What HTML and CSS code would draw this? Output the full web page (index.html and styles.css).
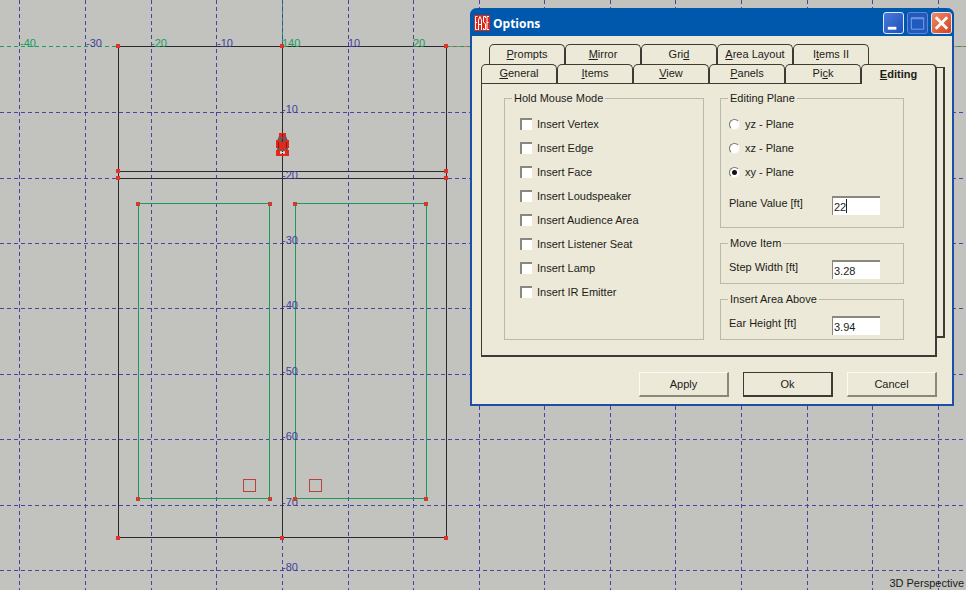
FILE: index.html
```html
<!DOCTYPE html>
<html lang="en">
<head>
<meta charset="utf-8">
<title>Options</title>
<link rel="stylesheet" href="styles.css">
</head>
<body>
<main class="workspace">
  <svg class="plan" aria-label="Floor plan">
    <line class="axis-y" x1="282.5" y1="0" x2="282.5" y2="46"/>
    <g class="grid">
      <line x1="19.5" y1="0" x2="19.5" y2="100%"/>
      <line x1="85.5" y1="0" x2="85.5" y2="100%"/>
      <line x1="151.5" y1="0" x2="151.5" y2="100%"/>
      <line x1="216.5" y1="0" x2="216.5" y2="100%"/>
      <line x1="282.5" y1="0" x2="282.5" y2="100%"/>
      <line x1="348.5" y1="0" x2="348.5" y2="100%"/>
      <line x1="413.5" y1="0" x2="413.5" y2="100%"/>
      <line x1="479.5" y1="0" x2="479.5" y2="100%"/>
      <line x1="544.5" y1="0" x2="544.5" y2="100%"/>
      <line x1="610.5" y1="0" x2="610.5" y2="100%"/>
      <line x1="675.5" y1="0" x2="675.5" y2="100%"/>
      <line x1="741.5" y1="0" x2="741.5" y2="100%"/>
      <line x1="807.5" y1="0" x2="807.5" y2="100%"/>
      <line x1="872.5" y1="0" x2="872.5" y2="100%"/>
      <line x1="938.5" y1="0" x2="938.5" y2="100%"/>
      <line x1="0" y1="112.5" x2="100%" y2="112.5"/>
      <line x1="0" y1="178.5" x2="100%" y2="178.5"/>
      <line x1="0" y1="243.5" x2="100%" y2="243.5"/>
      <line x1="0" y1="308.5" x2="100%" y2="308.5"/>
      <line x1="0" y1="374.5" x2="100%" y2="374.5"/>
      <line x1="0" y1="439.5" x2="100%" y2="439.5"/>
      <line x1="0" y1="505.5" x2="100%" y2="505.5"/>
      <line x1="0" y1="570.5" x2="100%" y2="570.5"/>
    </g>
    <line class="axis-x" x1="446" y1="46.5" x2="100%" y2="46.5"/>
    <line class="axis" x1="0" y1="46.5" x2="118" y2="46.5"/>
    <line class="axis" x1="446" y1="46.5" x2="100%" y2="46.5"/>
    <g class="seating">
      <rect x="138.5" y="203.5" width="131" height="295"/>
      <rect x="295.5" y="203.5" width="131" height="295"/>
    </g>
    <g class="walls">
      <rect x="118.5" y="46.5" width="328" height="491"/>
      <line x1="118" y1="171.5" x2="446" y2="171.5"/>
      <line x1="118" y1="178.5" x2="446" y2="178.5"/>
      <line x1="282.5" y1="46" x2="282.5" y2="538"/>
    </g>
    <g class="ticks">
      <text class="on-axis" x="20" y="47">-40</text>
      <text x="86" y="47">-30</text>
      <text class="on-axis" x="151" y="47">-20</text>
      <text x="217" y="47">-10</text>
      <text class="on-axis" x="282" y="47">140</text>
      <text x="348" y="47">10</text>
      <text class="on-axis" x="413" y="47">20</text>
      <text x="282" y="113">-10</text>
      <text x="282" y="179">-20</text>
      <text x="282" y="244">-30</text>
      <text x="282" y="309">-40</text>
      <text x="282" y="375">-50</text>
      <text x="282" y="440">-60</text>
      <text x="282" y="506">-70</text>
      <text x="282" y="571">-80</text>
    </g>
    <g class="seats">
      <rect x="243.5" y="479.5" width="12" height="12"/>
      <rect x="309.5" y="479.5" width="12" height="12"/>
    </g>
    <g class="vertices">
      <rect x="116" y="44" width="4" height="4"/>
      <rect x="280" y="44" width="4" height="4"/>
      <rect x="444" y="44" width="4" height="4"/>
      <rect x="116" y="169" width="4" height="4"/>
      <rect x="444" y="169" width="4" height="4"/>
      <rect x="116" y="176" width="4" height="4"/>
      <rect x="444" y="176" width="4" height="4"/>
      <rect x="116" y="536" width="4" height="4"/>
      <rect x="280" y="536" width="4" height="4"/>
      <rect x="444" y="536" width="4" height="4"/>
    </g>
    <g class="vertices seat-vertices">
      <rect x="136" y="202" width="4" height="4"/>
      <rect x="268" y="202" width="4" height="4"/>
      <rect x="293" y="202" width="4" height="4"/>
      <rect x="424" y="202" width="4" height="4"/>
      <rect x="136" y="497" width="4" height="4"/>
      <rect x="268" y="497" width="4" height="4"/>
      <rect x="293" y="497" width="4" height="4"/>
      <rect x="424" y="497" width="4" height="4"/>
    </g>
    <g class="speaker">
      <path class="cage" d="M279 136h7l2 5v10h-11v-10z"/>
      <rect x="279" y="133" width="7" height="4"/>
      <rect x="276" y="140" width="4" height="8"/>
      <rect x="285" y="140" width="4" height="8"/>
      <rect x="280" y="142" width="5" height="8"/>
      <path class="shade" d="M282.500 134v3M278.500 142v6M286.500 142v6M282.500 138v4"/>
      <rect x="276" y="150" width="4" height="6"/>
      <rect x="285" y="150" width="4" height="6"/>
      <rect x="279" y="154" width="7" height="2"/>
      <path class="glint" d="M280 152.500h5"/>
    </g>
  </svg>
  <div class="view-name">3D Perspective</div>

  <section class="dialog" role="dialog" aria-labelledby="dialog-title">
    <header class="titlebar">
      <svg class="logo" viewBox="0 0 16 16" aria-hidden="true">
        <rect width="16" height="16" fill="#d8281e"/>
        <path d="M3.500 1.500h-2v13h2M1.500 7.500h1.500M4.500 15V5L6 1.500L7.500 5V15M4.500 9.500h3M11.500 3V1.500h-2V7l2 2v5.500h-2V13M15 1.500h-2v13h2M13 7.500h1.500" fill="none" stroke="#fff"/>
      </svg>
      <h1 id="dialog-title">Options</h1>
      <button class="caption" type="button" aria-label="Minimize">
        <svg viewBox="0 0 20 20"><path d="M4 14h9v3H4z" fill="#fff"/></svg>
      </button>
      <button class="caption disabled" type="button" aria-label="Maximize" disabled>
        <svg viewBox="0 0 20 20"><path d="M3.500 4.500h13v12h-13zM3 5.500h14" fill="none" stroke="#7fa0ee"/></svg>
      </button>
      <button class="caption close" type="button" aria-label="Close">
        <svg viewBox="0 0 20 20"><path d="M4 4l12 12M16 4L4 16" stroke="#fff" stroke-width="3"/></svg>
      </button>
    </header>

    <form class="body">
      <div class="tabset">
        <div class="tabs back" role="tablist">
          <button type="button" role="tab"><span><u>P</u>rompts</span></button>
          <button type="button" role="tab"><span><u>M</u>irror</span></button>
          <button type="button" role="tab"><span>Gri<u>d</u></span></button>
          <button type="button" role="tab"><span><u>A</u>rea Layout</span></button>
          <button type="button" role="tab"><span>I<u>t</u>ems II</span></button>
        </div>
        <div class="tabs" role="tablist">
          <button type="button" role="tab"><span><u>G</u>eneral</span></button>
          <button type="button" role="tab"><span><u>I</u>tems</span></button>
          <button type="button" role="tab"><span><u>V</u>iew</span></button>
          <button type="button" role="tab"><span><u>P</u>anels</span></button>
          <button type="button" role="tab"><span>Pi<u>c</u>k</span></button>
          <button type="button" role="tab" class="active" aria-selected="true"><span><u>E</u>diting</span></button>
        </div>
        <div class="page" role="tabpanel">
          <fieldset class="modes">
            <legend>Hold Mouse Mode</legend>
            <label class="option"><input type="checkbox">Insert Vertex</label>
            <label class="option"><input type="checkbox">Insert Edge</label>
            <label class="option"><input type="checkbox">Insert Face</label>
            <label class="option"><input type="checkbox">Insert Loudspeaker</label>
            <label class="option"><input type="checkbox">Insert Audience Area</label>
            <label class="option"><input type="checkbox">Insert Listener Seat</label>
            <label class="option"><input type="checkbox">Insert Lamp</label>
            <label class="option"><input type="checkbox">Insert IR Emitter</label>
          </fieldset>
          <div class="column">
            <fieldset class="plane">
              <legend>Editing Plane</legend>
              <label class="option"><input type="radio" name="plane">yz - Plane</label>
              <label class="option"><input type="radio" name="plane">xz - Plane</label>
              <label class="option"><input type="radio" name="plane" checked>xy - Plane</label>
              <div class="field">
                <label for="plane-value">Plane Value [ft]</label>
                <span class="box focused"><input id="plane-value" type="text" value="22"></span>
              </div>
            </fieldset>
            <fieldset class="single">
              <legend>Move Item</legend>
              <div class="field">
                <label for="step-width">Step Width [ft]</label>
                <span class="box"><input id="step-width" type="text" value="3.28"></span>
              </div>
            </fieldset>
            <fieldset class="single">
              <legend>Insert Area Above</legend>
              <div class="field">
                <label for="ear-height">Ear Height [ft]</label>
                <span class="box"><input id="ear-height" type="text" value="3.94"></span>
              </div>
            </fieldset>
          </div>
        </div>
      </div>
      <footer class="actions">
        <button type="button">Apply</button>
        <button type="button" class="default">Ok</button>
        <button type="button">Cancel</button>
      </footer>
    </form>
  </section>
</main>
</body>
</html>
```
FILE: styles.css
```css
* {
  box-sizing: border-box;
}

body {
  margin: 0;
  font: 11px/14px "Liberation Sans", Arial, sans-serif;
  color: #1c1c18;
}

button,
input {
  font: inherit;
  color: inherit;
  margin: 0;
}

.workspace {
  position: relative;
  min-height: 100vh;
  background: #c2c2bf;
  overflow: hidden;
}

/* Drawing */

.plan {
  position: absolute;
  inset: 0;
  width: 100%;
  height: 100%;
}

.grid line {
  stroke: #4845a0;
  stroke-dasharray: 4 3;
}

.axis,
.axis-y {
  stroke: #16a05c;
  stroke-width: 1;
}

.axis {
  stroke-dasharray: 4 3;
}

.axis-x {
  stroke: #d4705c;
}

.walls {
  fill: none;
  stroke: #2b2b2b;
}

.seating {
  fill: none;
  stroke: #1c9a5c;
}

.ticks {
  font-size: 11px;
  fill: #45439a;
}

.ticks .on-axis {
  fill: #16a05c;
}

.seats {
  fill: none;
  stroke: #b8433c;
}

.vertices {
  fill: #e0322a;
}

.seat-vertices {
  fill: #c8402c;
}

.speaker {
  fill: #e0281c;
}

.speaker .cage {
  fill: #6e5a54;
}

.speaker .shade {
  stroke: #7c1c14;
}

.speaker .glint {
  stroke: #f4d4cc;
}

.view-name {
  position: absolute;
  right: 2px;
  bottom: 0;
}

/* Dialog window */

.dialog {
  position: absolute;
  left: 470px;
  top: 8px;
  border: solid #1d4fa8;
  border-width: 0 2px 2px;
  border-radius: 7px 7px 0 0;
  background: #ece9d8;
}

.titlebar {
  display: flex;
  align-items: center;
  gap: 3px;
  height: 28px;
  padding: 2px 2px 0;
  margin: 0 -2px;
  border-radius: 7px 7px 0 0;
  background: #0058ad;
}

.logo {
  width: 16px;
  height: 16px;
  margin-left: 2px;
}

.titlebar h1 {
  flex: 1;
  margin: 0;
  padding-top: 2px;
  font: bold 12px/16px "Open Sans", sans-serif;
  color: #fff;
}

.caption {
  width: 21px;
  height: 22px;
  padding: 0;
  border: 1px solid #dfe8fa;
  border-radius: 3px;
  background: linear-gradient(135deg, #4a7ad8, #1c50bc);
}

.caption svg {
  display: block;
  width: 19px;
  height: 20px;
}

.caption.disabled {
  border-color: #5f86d8;
  background: #1f5abc;
}

.caption.close {
  background: linear-gradient(135deg, #f08a68, #d8401c);
}

.body {
  padding: 8px 15px 7px 9px;
}

/* Tabs */

.tabset {
  position: relative;
  z-index: 0;
}

.tabset::before {
  content: "";
  position: absolute;
  z-index: -1;
  top: 23px;
  right: -8px;
  bottom: 19px;
  width: 30px;
  border: solid #3c3c34;
  border-width: 1px 2px 2px 0;
}

.tabs {
  display: flex;
}

.tabs.back {
  padding-left: 8px;
}

.tabs button {
  width: 76px;
  height: 19px;
  padding: 0 0 2px;
  border: 1px solid #3c3c34;
  border-bottom: 0;
  border-radius: 5px 5px 0 0;
  background: #ece9d8;
}

.tabs.back button {
  height: 20px;
}

.tabs .active {
  height: 20px;
  margin-bottom: -1px;
  border-right-width: 2px;
  font-weight: bold;
}

.page {
  display: grid;
  grid-template-columns: 200px 184px;
  gap: 16px;
  padding: 8px 31px 15px 22px;
  border: solid #3c3c34;
  border-width: 0 2px 2px 1px;
  background: linear-gradient(#3c3c34, #3c3c34) 0 0 / 380px 1px no-repeat, #ece9d8;
}

.column {
  display: flex;
  flex-direction: column;
  gap: 8px;
}

fieldset {
  min-width: 0;
  margin: 0;
  padding: 7px 8px 12px;
  border: 1px solid #bbb9a9;
}

fieldset.modes {
  padding-left: 15px;
}

fieldset.single {
  padding: 10px 8px 4px;
}

.modes legend {
  margin-left: -8px;
}

legend {
  margin-left: -1px;
  padding: 0 2px;
  font-size: 11px;
  line-height: 14px;
}

.option {
  display: flex;
  align-items: center;
  gap: 5px;
  height: 24px;
}

.option input {
  appearance: none;
  width: 12px;
  height: 12px;
  border: solid #8a887c;
  border-width: 2px 0 0 2px;
  background: #fff;
}

.option input[type="radio"] {
  width: 11px;
  height: 11px;
  border: 1px solid;
  border-color: #77756a #f4f2e8 #f4f2e8 #77756a;
  border-radius: 50%;
}

.option input[type="radio"]:checked {
  background: radial-gradient(circle, #111 2px, #fff 3px);
}

.field {
  display: flex;
  align-items: flex-start;
  justify-content: space-between;
  padding-right: 15px;
}

.plane .field {
  margin-top: 12px;
}

.box {
  position: relative;
  width: 48px;
}

.box input {
  display: block;
  width: 100%;
  height: 19px;
  padding: 1px 1px 0;
  border: solid #8a887c;
  border-width: 2px 0 0 1px;
  border-radius: 0;
  background: #fff;
}

/* Text caret after the value */
.focused::after {
  content: "";
  position: absolute;
  left: 14px;
  top: 3px;
  width: 1px;
  height: 14px;
  background: #222;
}

/* Buttons */

.actions {
  display: flex;
  justify-content: flex-end;
  gap: 14px;
  padding-top: 15px;
}

.actions button {
  width: 90px;
  height: 25px;
  padding: 0;
  border: solid;
  border-width: 1px 2px 2px 1px;
  border-color: #fbfaf4 #8a887c #8a887c #fbfaf4;
  background: #ece9d8;
}

.actions .default {
  border-color: #3c3c34;
}
```
